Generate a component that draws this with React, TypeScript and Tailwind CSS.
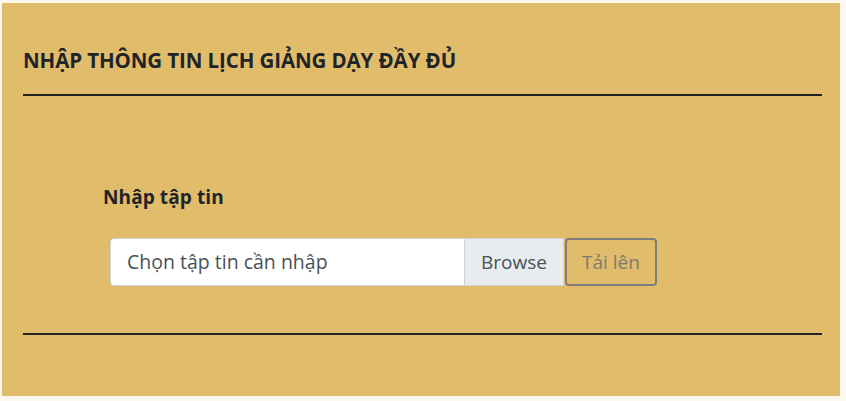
export default function App() {
  return (
    <div className="h-[401px] w-[846px] bg-[#fdf8ee] pl-[2px] pt-[3px]" style={{ fontFamily: '"Open Sans", "Noto Sans", sans-serif' }}>
      <div className="flex h-[393px] w-[838px] flex-col bg-[#e1bc6b] pl-[21px] pr-[18px]">
        <h2 className="mt-[45px] text-[20.5px] font-bold leading-[24px] tracking-[-0.1px] text-[#1f2428]">
          NHẬP THÔNG TIN LỊCH GIẢNG DẠY ĐẦY ĐỦ
        </h2>
        <div className="mt-[22px] h-[2px] bg-[#222]" />
        <div className="ml-[80px] mt-[89px] text-[19px] font-bold leading-[24px] tracking-[0.1px] text-[#1f2428]">
          Nhập tập tin
        </div>
        <div className="ml-[87px] mt-[29px] flex h-[48px] items-stretch">
          <div className="flex w-[355px] items-center rounded-l-[4px] border border-[#ced4da] bg-white pl-[16px] text-[19.5px] text-[#495057]">
            Chọn tập tin cần nhập
          </div>
          <div className="flex w-[99px] items-center justify-center border border-l-0 border-[#ced4da] bg-[#e9ecef] text-[19px] text-[#495057]">
            Browse
          </div>
          <button className="ml-[1px] flex w-[92px] items-center justify-center rounded-[4px] border-2 border-[#7d7d7d] text-[19px] text-[#7b7b72]">
            Tải lên
          </button>
        </div>
        <div className="mt-[47px] h-[2px] bg-[#222]" />
      </div>
    </div>
  );
}
